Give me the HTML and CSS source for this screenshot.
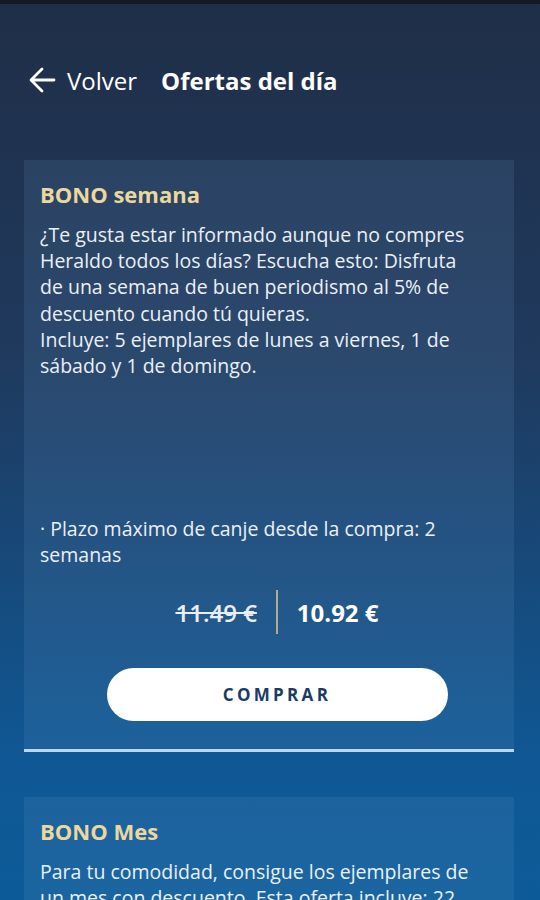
FILE: index.html
```html
<!DOCTYPE html>
<html lang="es">
<head>
<meta charset="utf-8">
<link rel="stylesheet" href="styles.css">
</head>
<body>
<div class="status"></div>
<header class="top">
  <a class="back">
    <svg class="back-icon" viewBox="0 0 28 28" width="28" height="28"><path d="M26 14H4M14 3L3 14l11 11" fill="none" stroke="#fff" stroke-width="2.8" stroke-linecap="round" stroke-linejoin="round"/></svg>
    <span>Volver</span>
  </a>
  <h1 class="title">Ofertas del día</h1>
</header>
<main class="list">
  <section class="card">
    <h2 class="card-title">BONO semana</h2>
    <p class="desc">¿Te gusta estar informado aunque no compres Heraldo todos los días? Escucha esto: Disfruta de una semana de buen periodismo al 5% de descuento cuando tú quieras.<br>Incluye: 5 ejemplares de lunes a viernes, 1 de sábado y 1 de domingo.</p>
    <p class="note">· Plazo máximo de canje desde la compra: 2 semanas</p>
    <div class="prices">
      <span class="old">11.49 €</span>
      <span class="sep"></span>
      <span class="new">10.92 €</span>
    </div>
    <div class="actions">
      <button class="buy">COMPRAR</button>
    </div>
  </section>
  <section class="card">
    <h2 class="card-title">BONO Mes</h2>
    <p class="desc">Para tu comodidad, consigue los ejemplares de un mes con descuento. Esta oferta incluye: 22 ejemplares de lunes a viernes, 4 de sábado y 4 de domingo.</p>
  </section>
</main>
</body>
</html>
```
FILE: styles.css
```css
html, body { margin: 0; padding: 0; }
body {
  width: 540px;
  height: 900px;
  overflow: hidden;
  background: linear-gradient(180deg, #1f2e47 0%, #1f3a5e 40%, #0f5895 85%, #0c5b98 100%);
  font-family: "Open Sans", "Noto Sans", sans-serif;
  color: #eaf0f6;
}
.status { height: 4px; background: #121a26; }
.top {
  display: flex;
  align-items: center;
  gap: 24px;
  height: 152px;
  padding: 0 28px;
  box-sizing: border-box;
}
.back {
  display: flex;
  align-items: center;
  gap: 11px;
  color: #fff;
  font-size: 24px;
}
.back-icon { display: block; }
.title {
  margin: 0;
  font-size: 24px;
  font-weight: 700;
  color: #fff;
}
.list {
  display: flex;
  flex-direction: column;
  gap: 45px;
  padding: 4px 26px 0 24px;
}
.card {
  background: rgba(120, 170, 220, 0.13);
  border-bottom: 3px solid #bcd6ee;
  padding: 16px 40px 28px 16px;
}
.card-title {
  margin: 0 0 10px;
  font-size: 22px;
  font-weight: 700;
  color: #ecd89c;
  line-height: 36px;
}
.desc {
  margin: 0;
  font-size: 19.5px;
  line-height: 26.2px;
  min-height: 294px;
}
.note {
  margin: 0;
  font-size: 19.5px;
  line-height: 26px;
}
.prices {
  display: flex;
  justify-content: center;
  align-items: center;
  gap: 19px;
  margin: 22px -40px 0 0;
  height: 44px;
}
.old {
  font-size: 24px;
  font-weight: 600;
  text-decoration: line-through;
  color: #e9eef4;
}
.sep { width: 2px; height: 44px; background: #b5aa8c; }
.new { font-size: 24px; font-weight: 700; color: #fff; }
.actions {
  display: flex;
  justify-content: center;
  margin: 34px -40px 0 0;
}
.buy {
  width: 341px;
  height: 53px;
  border: 0;
  border-radius: 27px;
  background: #fff;
  color: #1b3b66;
  font-family: "Open Sans", sans-serif;
  font-size: 17px;
  font-weight: 700;
  letter-spacing: 3.3px;
}
```
